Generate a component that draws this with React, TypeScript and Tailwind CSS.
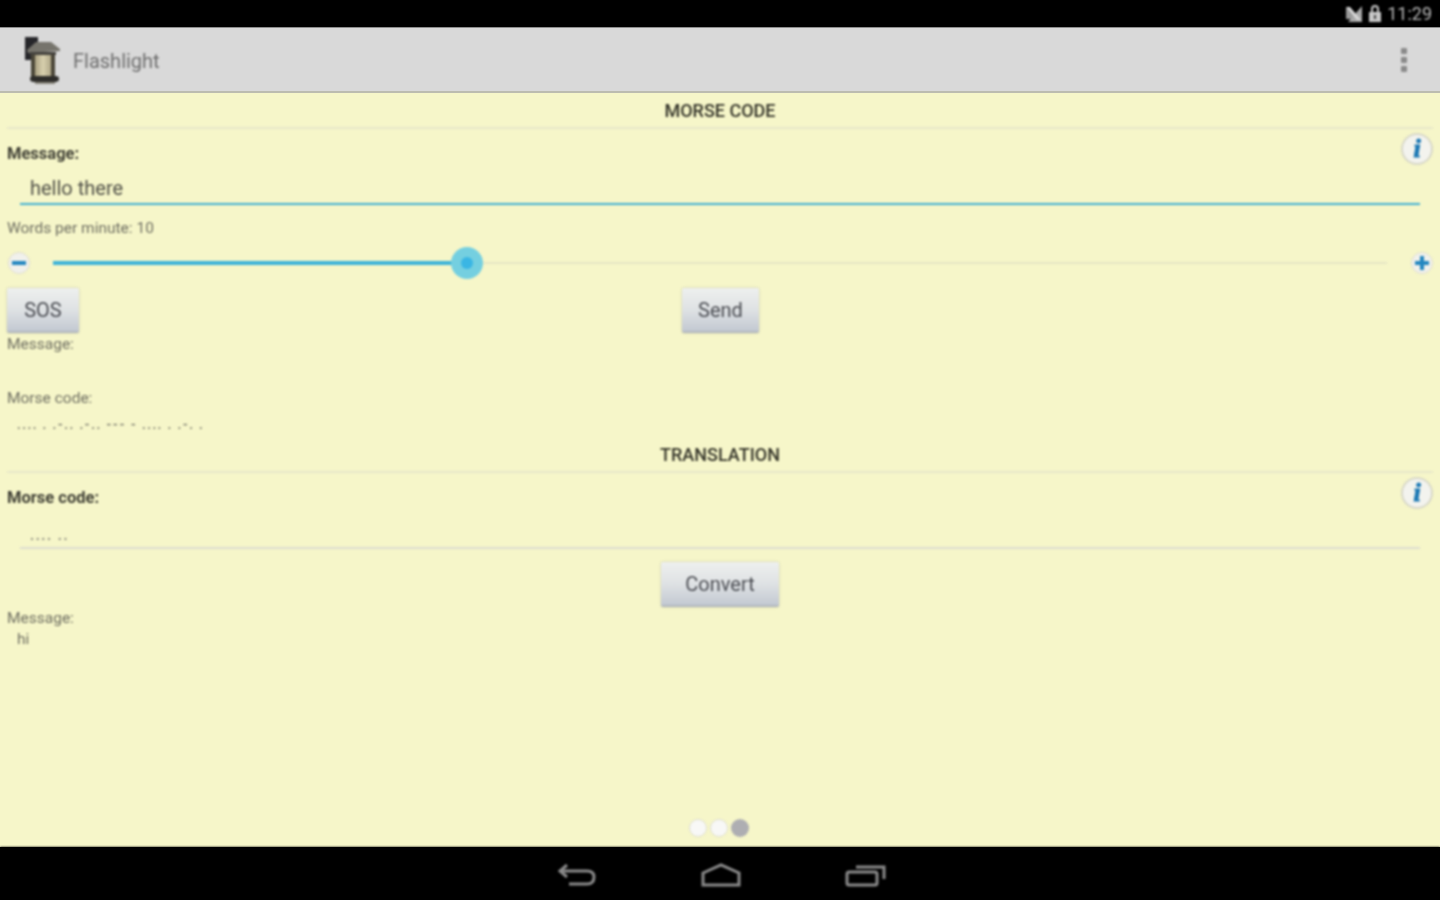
import React from "react";

function Lantern() {
  return (
    <svg width="40" height="50" viewBox="0 0 40 50" className="shrink-0">
      <defs>
        <linearGradient id="glass" x1="0" x2="1" y1="0" y2="0">
          <stop offset="0" stopColor="#a89f80" />
          <stop offset="0.5" stopColor="#d8d0ae" />
          <stop offset="1" stopColor="#b0a888" />
        </linearGradient>
      </defs>
      <rect x="2" y="2" width="13" height="23" fill="#26262a" />
      <path d="M4 15 L13 7 L28 7 L37 14 L37 16 L5 18 Z" fill="#76746c" />
      <rect x="7" y="17" width="26" height="3" fill="#45433e" />
      <rect x="8" y="20" width="24" height="22" fill="#4a4638" />
      <rect x="12" y="20" width="16" height="21" fill="url(#glass)" />
      <path d="M7 44 Q7 41 10 41 L33 41 Q36 41 36 44 Q36 47 32 47 L11 47 Q7 47 7 44 Z" fill="#2e2d2a" />
      <rect x="12" y="47" width="20" height="2" fill="#8a877c" />
    </svg>
  );
}

function InfoIcon() {
  return (
    <div className="w-[32px] h-[32px] rounded-full bg-[#f3f3ee] border-2 border-[#d8d8c8] flex items-center justify-center shrink-0">
      <span className="text-[26px] leading-none font-bold italic text-[#1b78b4] [font-family:'Liberation_Serif',serif] [-webkit-text-stroke:1px_#1b78b4]">i</span>
    </div>
  );
}

function Round({ plus }: { plus?: boolean }) {
  return (
    <div className="w-[22px] h-[22px] rounded-full bg-[#f1f1ec] border border-[#dedcd0] relative shrink-0">
      <div className="absolute left-[3px] right-[3px] top-[8px] h-[4px] bg-[#2487c0]" />
      {plus && <div className="absolute top-[3px] bottom-[3px] left-[8px] w-[4px] bg-[#2487c0]" />}
    </div>
  );
}

function Btn({ w, children }: { w: string; children: React.ReactNode }) {
  return (
    <div className={`${w} h-[45px] rounded-[2px] flex items-center justify-center text-[20px] text-[#4a4c52] bg-gradient-to-b from-[#eef0ef] via-[#dfe2e4] to-[#c3c9d2] border-b-2 border-[#b3b9bf] shadow-[0_0_2px_rgba(120,120,110,0.5)]`}>
      {children}
    </div>
  );
}

function Header({ children }: { children: React.ReactNode }) {
  return (
    <div className="mx-[7px] border-b-2 border-[#e8e8c8] h-[36px] pt-[1px] flex items-center justify-center text-[18px] font-medium text-[#333328]">
      {children}
    </div>
  );
}

export default function App() {
  return (
    <div className="w-[1440px] h-[900px] flex flex-col overflow-hidden bg-black [font-family:Roboto,sans-serif]">
      <div className="h-[27px] shrink-0 flex items-center justify-end pr-[8px] gap-[5px] text-[#b8b8b8] blur-[0.8px]">
        <svg width="18" height="18" viewBox="0 0 18 18">
          <path d="M1 2 L12 14 L1 14 Z" fill="#9a9a9a" />
          <path d="M17 1 L17 17 L3 17 Z" fill="#a8a8a8" />
          <path d="M1 2 L5 2 L16 15 L12 15 Z" fill="#d8d8d8" />
        </svg>
        <svg width="14" height="18" viewBox="0 0 14 18">
          <rect x="1" y="7" width="12" height="10" fill="#c8c8c8" />
          <path d="M4 7 V4 A3 3 0 0 1 10 4 V7" stroke="#c8c8c8" strokeWidth="2" fill="none" />
          <rect x="6" y="10" width="2" height="4" fill="#444" />
        </svg>
        <span className="text-[18px] leading-none">11:29</span>
      </div>
      <div className="h-[66px] shrink-0 bg-[#d9d9d9] border-t border-[#8c8c8c] border-b-2 border-b-[#bcbcb0]">
        <div className="h-full flex items-center pl-[23px] pr-[30px] blur-[0.8px]">
          <Lantern />
          <span className="ml-[10px] mt-[2px] text-[20px] text-[#6e6e6e]">Flashlight</span>
          <div className="ml-auto flex flex-col gap-[3px] mr-[3px]">
            <div className="w-[6px] h-[6px] rounded-[1px] bg-[#8a8a8a]" />
            <div className="w-[6px] h-[6px] rounded-[1px] bg-[#8a8a8a]" />
            <div className="w-[6px] h-[6px] rounded-[1px] bg-[#8a8a8a]" />
          </div>
        </div>
      </div>
      <div className="flex-1 bg-[#f6f6c9] flex flex-col">
        <div className="flex-1 flex flex-col text-[#6f6f62] blur-[0.8px]">
          <Header>MORSE CODE</Header>
          <div className="h-[40px] flex justify-between items-start pl-[7px] pr-[7px] pt-[4px]">
            <span className="mt-[11px] text-[16.5px] leading-[20px] font-bold text-[#3f3f34]">Message:</span>
            <InfoIcon />
          </div>
          <div className="mx-[20px] h-[36px] border-b-2 border-[#41b0d2] pl-[10px] text-[20px] leading-[38px] text-[#505048]">
            hello there
          </div>
          <div className="pl-[7px] mt-[13px] text-[15.5px] leading-[20px]">Words per minute: 10</div>
          <div className="h-[40px] mt-[5px] mb-[5px] flex items-center pl-[8px] pr-[7px]">
            <Round />
            <div className="flex-1 ml-[23px] mr-[24px] h-[2px] bg-[#e6e6c4] relative">
              <div className="absolute left-0 top-[-1px] h-[4px] w-[414px] bg-[#3db3d8]" />
              <div className="absolute left-[398px] top-[-15px] w-[32px] h-[32px] rounded-full bg-[#74cfe0] flex items-center justify-center">
                <div className="w-[12px] h-[12px] rounded-full bg-[#3ab6e4]" />
              </div>
            </div>
            <Round plus />
          </div>
          <div className="h-[45px] relative flex justify-center pl-[1px]">
            <div className="absolute left-[7px] top-0"><Btn w="w-[72px]">SOS</Btn></div>
            <Btn w="w-[77px]">Send</Btn>
          </div>
          <div className="pl-[7px] mt-[1px] text-[15.5px] leading-[20px]">Message:</div>
          <div className="h-[34px]" />
          <div className="pl-[7px] text-[15.5px] leading-[20px]">Morse code:</div>
          <div className="pl-[17px] mt-[7px] h-[22px] text-[13px] font-bold leading-[20px] tracking-[1.45px] text-[#7e7e70]">.... . .-.. .-.. --- - .... . .-. .</div>
          <Header>TRANSLATION</Header>
          <div className="h-[40px] flex justify-between items-start px-[7px] pt-[4px]">
            <span className="mt-[11px] text-[16.5px] leading-[20px] font-bold text-[#3f3f34]">Morse code:</span>
            <InfoIcon />
          </div>
          <div className="mx-[20px] h-[36px] border-b-2 border-[#deded0] pl-[10px] text-[14px] font-bold tracking-[1.6px] leading-[45px] text-[#8e8e80]">
            .... ..
          </div>
          <div className="mt-[13px] flex justify-center">
            <Btn w="w-[118px]">Convert</Btn>
          </div>
          <div className="pl-[7px] mt-[1px] text-[15.5px] leading-[20px]">Message:</div>
          <div className="pl-[17px] mt-[1px] text-[15.5px] leading-[20px]">hi</div>
          <div className="mt-auto mb-[10px] pr-[2px] flex justify-center gap-[3px]">
            <div className="w-[18px] h-[18px] rounded-full bg-[#f8f8f6] border border-[#deded0]" />
            <div className="w-[18px] h-[18px] rounded-full bg-[#f8f8f6] border border-[#deded0]" />
            <div className="w-[18px] h-[18px] rounded-full bg-[#aeaeb2]" />
          </div>
        </div>
      </div>
      <div className="h-[53px] shrink-0 bg-black flex items-center justify-center gap-[103px] pt-[2px] pl-[4px] blur-[0.8px]">
        <svg width="40" height="26" viewBox="0 0 40 26" fill="none" stroke="#8a8a8a" strokeWidth="3">
          <path d="M10 3 L3 9 L10 15" />
          <path d="M4 9 H30 Q37 9 37 15 Q37 22 30 22 H12" />
        </svg>
        <svg width="42" height="24" viewBox="0 0 42 24" fill="none" stroke="#8a8a8a" strokeWidth="3">
          <path d="M3 10 L21 2 L39 10 V22 H3 Z" />
        </svg>
        <svg width="42" height="24" viewBox="0 0 42 24" fill="none" stroke="#8a8a8a" strokeWidth="3">
          <rect x="2" y="9" width="30" height="13" rx="2" />
          <path d="M11 4 H39 V16" />
        </svg>
      </div>
    </div>
  );
}
